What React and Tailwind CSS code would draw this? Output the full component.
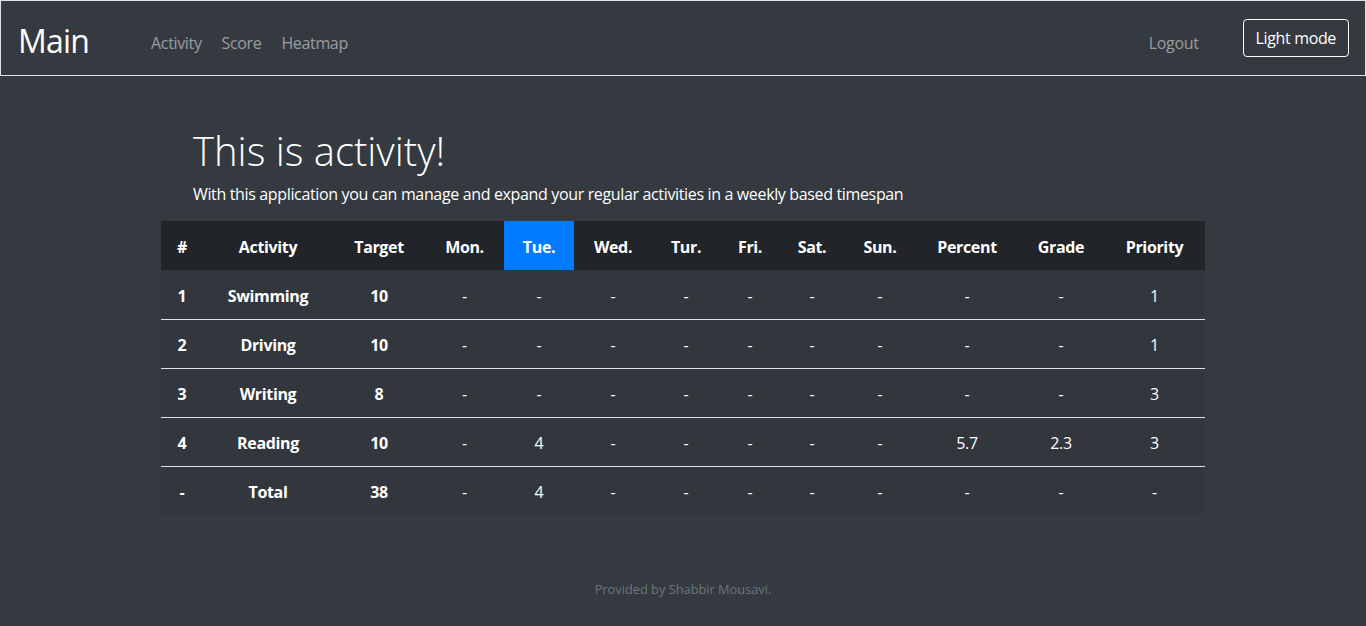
import React from 'react';

const cols = [
  { key: 'n', label: '#', w: 'w-[42px]' },
  { key: 'a', label: 'Activity', w: 'w-[130px]' },
  { key: 't', label: 'Target', w: 'w-[92px]' },
  { key: 'mon', label: 'Mon.', w: 'w-[79px]' },
  { key: 'tue', label: 'Tue.', w: 'w-[70px]' },
  { key: 'wed', label: 'Wed.', w: 'w-[78px]' },
  { key: 'tur', label: 'Tur.', w: 'w-[68px]' },
  { key: 'fri', label: 'Fri.', w: 'w-[60px]' },
  { key: 'sat', label: 'Sat.', w: 'w-[64px]' },
  { key: 'sun', label: 'Sun.', w: 'w-[72px]' },
  { key: 'pct', label: 'Percent', w: 'w-[102px]' },
  { key: 'grade', label: 'Grade', w: 'w-[86px]' },
  { key: 'prio', label: 'Priority', w: 'w-[101px]' },
];

const rows = [
  ['1', 'Swimming', '10', '-', '-', '-', '-', '-', '-', '-', '-', '-', '1'],
  ['2', 'Driving', '10', '-', '-', '-', '-', '-', '-', '-', '-', '-', '1'],
  ['3', 'Writing', '8', '-', '-', '-', '-', '-', '-', '-', '-', '-', '3'],
  ['4', 'Reading', '10', '-', '4', '-', '-', '-', '-', '-', '5.7', '2.3', '3'],
  ['-', 'Total', '38', '-', '4', '-', '-', '-', '-', '-', '-', '-', '-'],
];

export default function App() {
  return (
    <div
      className="min-h-[626px] bg-[#343a40] text-white flex flex-col tracking-[-0.35px]"
      style={{ fontFamily: '"Open Sans", "Noto Sans", Arial, sans-serif' }}
    >
      {/* navbar */}
      <nav className="h-[76px] border border-[#dee2e6] flex items-center pl-[17px] pr-4 pt-[9px]">
        <a className="text-[32px] leading-none text-white mr-[62px] pb-[4px] tracking-[-0.8px]">Main</a>
        <div className="flex gap-5 text-[16px] text-white/50 pt-[1px]">
          <a>Activity</a>
          <a>Score</a>
          <a>Heatmap</a>
        </div>
        <div className="ml-auto flex items-center">
          <a className="text-[16px] text-white/50 mr-[44px] pt-[1px]">Logout</a>
          <button className="h-[38px] px-3 border border-white rounded text-[16px] text-white -mt-[9px]">
            Light mode
          </button>
        </div>
      </nav>

      {/* content */}
      <main className="w-[1044px] mx-auto pt-[51px]">
        <div className="px-8">
          <h1 className="text-[40px] font-light leading-[1.2] tracking-normal">This is activity!</h1>
          <p className="text-[16px] mt-[7px] mb-[15px]">
            With this application you can manage and expand your regular activities in a weekly based timespan
          </p>
        </div>
        <table className="w-full table-fixed border-collapse text-[16px] text-center">
          <thead>
            <tr className="bg-[#212529] h-[49px]">
              {cols.map((c) => (
                <th
                  key={c.key}
                  className={`${c.w} font-bold pt-[2px] ${c.key === 'tue' ? 'bg-[#007bff]' : ''}`}
                >
                  {c.label}
                </th>
              ))}
            </tr>
          </thead>
          <tbody className="bg-[#32363d]">
            {rows.map((r, i) => (
              <tr key={i} className={`h-[49px] ${i < rows.length - 1 ? 'border-b border-[#dee2e6]' : ''}`}>
                {r.map((v, j) => (
                  <td key={j} className={`pt-[3px] ${j < 3 ? 'font-bold' : 'font-normal'}`}>
                    {v}
                  </td>
                ))}
              </tr>
            ))}
          </tbody>
        </table>
      </main>

      <footer className="mt-auto pb-[27px] text-center text-[12.8px] text-[#6c757d] tracking-normal">
        Provided by Shabbir Mousavi.
      </footer>
    </div>
  );
}
